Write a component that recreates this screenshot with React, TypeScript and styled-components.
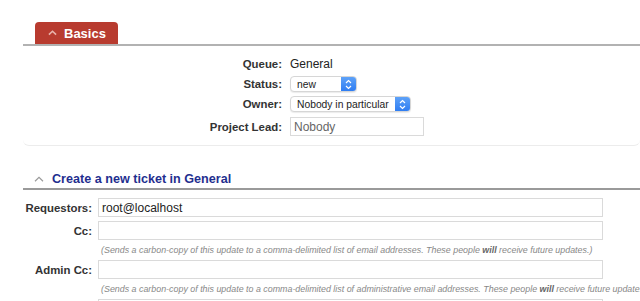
import styled, { createGlobalStyle } from 'styled-components'

const GlobalStyle = createGlobalStyle`
  html, body {
    margin: 0;
    padding: 0;
    background: #fff;
    overflow: hidden;
  }
  body {
    font-family: 'Liberation Sans', Arial, Helvetica, sans-serif;
    color: #333;
  }
`

const Page = styled.div`
  width: 640px;
  height: 301px;
  box-sizing: border-box;
  overflow: hidden;
  padding: 22px 0 0 23px;
`

const TitleBox = styled.section`
  display: flex;
  flex-direction: column;
`

const Tab = styled.div`
  align-self: flex-start;
  margin-left: 12px;
  width: 83px;
  height: 22px;
  box-sizing: border-box;
  padding-left: 13px;
  display: flex;
  align-items: center;
  gap: 7px;
  background: #b83b2f;
  border-radius: 4px 4px 0 0;
  color: #fff;
  font-weight: bold;
  font-size: 13px;
`

const BoxBody = styled.div`
  border-top: 2px solid #b2b2b2;
  border-bottom: 1px solid #ececec;
  border-radius: 0 0 6px 6px;
  padding: 9px 0 8px;
`

const BasicsGrid = styled.div`
  display: grid;
  grid-template-columns: 259px 1fr;
  column-gap: 8px;
  row-gap: 4px;
  align-items: center;
`

const Label = styled.div`
  text-align: right;
  font-weight: bold;
  font-size: 11.4px;
  color: #333;
`

const Value = styled.div<{ h?: number }>`
  font-size: 12px;
  color: #222;
  height: ${(p) => p.h ?? 17}px;
  display: flex;
  align-items: center;
`

const SelectBox = styled.div<{ w: number }>`
  width: ${(p) => p.w}px;
  height: 16px;
  box-sizing: border-box;
  border: 1px solid #d6d6d6;
  border-radius: 4px;
  background: #fff;
  box-shadow: 0 1px 1px rgba(0, 0, 0, 0.08);
  display: flex;
  align-items: center;
  font-size: 10.3px;
  color: #222;
  overflow: hidden;
`

const SelectText = styled.span`
  flex: 1;
  padding-left: 6px;
  white-space: nowrap;
`

const Stepper = styled.span`
  width: 15px;
  height: 100%;
  background: linear-gradient(#5ea2f8, #2f7df2);
  display: flex;
  align-items: center;
  justify-content: center;
`

const TextInput = styled.div<{ w: number; muted?: boolean }>`
  width: ${(p) => p.w}px;
  height: 19px;
  box-sizing: border-box;
  border: 1px solid #dadada;
  background: #fff;
  padding-left: 3px;
  display: flex;
  align-items: center;
  font-size: 12px;
  color: ${(p) => (p.muted ? '#666' : '#222')};
`

const SectionHeader = styled.h2`
  margin: 24px 0 0;
  padding: 0 0 1px 11px;
  height: 17px;
  display: flex;
  align-items: center;
  gap: 8px;
  border-bottom: 2px solid #9a9a9a;
  color: #1f2f8f;
  font-size: 12.6px;
  font-weight: bold;
`

const TicketGrid = styled.div`
  display: grid;
  grid-template-columns: 69px 1fr;
  column-gap: 6px;
  row-gap: 4px;
  align-items: center;
  padding-top: 8px;
`

const Hint = styled.div`
  grid-column: 2;
  font-size: 8.9px;
  font-style: italic;
  color: #888;
  white-space: nowrap;
  padding-left: 3px;
  height: 12px;
  line-height: 12px;
  b {
    font-weight: bold;
    color: #666;
  }
`

const Chevron = ({
  color,
  weight = 1.6,
  w = 10,
}: {
  color: string
  weight?: number
  w?: number
}) => (
  <svg width={w} height={w * 0.6} viewBox="0 0 10 6" aria-hidden="true">
    <path d="M1 5.2 L5 1.4 L9 5.2" fill="none" stroke={color} strokeWidth={weight} />
  </svg>
)

const Arrows = () => (
  <svg width="7" height="11" viewBox="0 0 7 11" aria-hidden="true">
    <path
      d="M1 4 L3.5 1.5 L6 4 M1 7 L3.5 9.5 L6 7"
      fill="none"
      stroke="#fff"
      strokeWidth="1.2"
    />
  </svg>
)

function Select({ value, width }: { value: string; width: number }) {
  return (
    <SelectBox w={width}>
      <SelectText>{value}</SelectText>
      <Stepper>
        <Arrows />
      </Stepper>
    </SelectBox>
  )
}

export default function App() {
  return (
    <>
      <GlobalStyle />
      <Page>
        <TitleBox>
          <Tab>
            <Chevron color="#e9b3ac" w={9} weight={1.8} />
            Basics
          </Tab>
          <BoxBody>
            <BasicsGrid>
              <Label>Queue:</Label>
              <Value>General</Value>
              <Label>Status:</Label>
              <Value h={16}>
                <Select value="new" width={67} />
              </Value>
              <Label>Owner:</Label>
              <Value h={16}>
                <Select value="Nobody in particular" width={121} />
              </Value>
              <Label>Project Lead:</Label>
              <Value h={21}>
                <TextInput w={134} muted>
                  Nobody
                </TextInput>
              </Value>
            </BasicsGrid>
          </BoxBody>
        </TitleBox>

        <SectionHeader>
          <Chevron color="#9a9a9a" weight={1.2} />
          Create a new ticket in General
        </SectionHeader>

        <TicketGrid>
          <Label>Requestors:</Label>
          <TextInput w={505}>root@localhost</TextInput>
          <Label>Cc:</Label>
          <TextInput w={505} />
          <Hint>
            (Sends a carbon-copy of this update to a comma-delimited list of email
            addresses. These people <b>will</b> receive future updates.)
          </Hint>
          <Label>Admin Cc:</Label>
          <TextInput w={505} />
          <Hint>
            (Sends a carbon-copy of this update to a comma-delimited list of
            administrative email addresses. These people <b>will</b> receive future
            updates.)
          </Hint>
          <Label />
          <TextInput w={505} />
        </TicketGrid>
      </Page>
    </>
  )
}
